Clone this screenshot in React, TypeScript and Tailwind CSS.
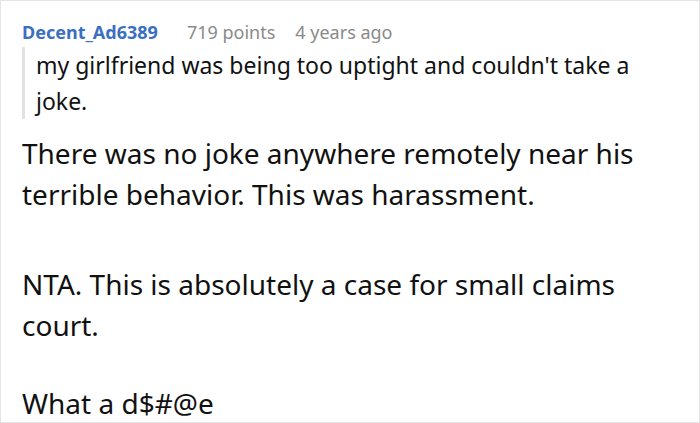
import React from "react";

export default function App() {
  return (
    <div className="w-[700px] h-[423px] overflow-hidden border border-[#e4e4e4] bg-white font-['Noto_Sans','Open_Sans',sans-serif] pl-[21px] pr-[40px] pt-[18px]">
      <div className="flex items-baseline text-[18px] leading-[26px]">
        <span className="font-bold text-[#3a6fc2]">Decent_Ad6389</span>
        <span className="ml-[29px] text-[#8a8a8a]">719 points</span>
        <span className="ml-[20px] text-[#8a8a8a]">4 years ago</span>
      </div>
      <div className="mt-[2px] border-l-[3px] border-[#e2e2e2] pl-[11px] text-[23px] leading-[36px] text-[#111]">
        my girlfriend was being too uptight and couldn't take a joke.
      </div>
      <div className="mt-[14px] text-[28px] leading-[41px] text-[#111]">
        <p className="mb-[49px]">There was no joke anywhere remotely near his terrible behavior. This was harassment.</p>
        <p className="mb-[37px]">NTA. This is absolutely a case for small claims court.</p>
        <p>What a d$#@e</p>
      </div>
    </div>
  );
}
